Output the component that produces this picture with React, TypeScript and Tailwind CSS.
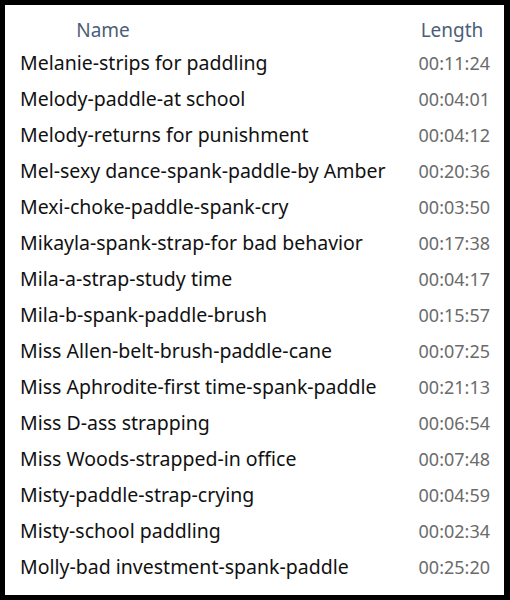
const rows: [string, string][] = [
  ["Melanie-strips for paddling", "00:11:24"],
  ["Melody-paddle-at school", "00:04:01"],
  ["Melody-returns for punishment", "00:04:12"],
  ["Mel-sexy dance-spank-paddle-by Amber", "00:20:36"],
  ["Mexi-choke-paddle-spank-cry", "00:03:50"],
  ["Mikayla-spank-strap-for bad behavior", "00:17:38"],
  ["Mila-a-strap-study time", "00:04:17"],
  ["Mila-b-spank-paddle-brush", "00:15:57"],
  ["Miss Allen-belt-brush-paddle-cane", "00:07:25"],
  ["Miss Aphrodite-first time-spank-paddle", "00:21:13"],
  ["Miss D-ass strapping", "00:06:54"],
  ["Miss Woods-strapped-in office", "00:07:48"],
  ["Misty-paddle-strap-crying", "00:04:59"],
  ["Misty-school paddling", "00:02:34"],
  ["Molly-bad investment-spank-paddle", "00:25:20"],
];

export default function App() {
  return (
    <div className="h-[600px] w-[510px] bg-black pb-[5px] pl-[5px] pr-[6px] pt-[5px] font-['Noto_Sans',sans-serif]">
      <div className="h-full w-full bg-white">
        <div className="flex h-[40px] items-center pt-[10px] text-[19px] text-[#4b5e78]">
          <div className="w-[196px] text-center">Name</div>
          <div className="flex-1" />
          <div className="w-[100px] pr-[4px] text-center">Length</div>
        </div>
        {rows.map(([name, len]) => (
          <div key={name} className="flex h-[36px] items-center pl-[15px] pr-[14px]">
            <span className="flex-1 text-[19.5px] text-[#111]">{name}</span>
            <span className="text-[18px] text-[#6b6b6b]">{len}</span>
          </div>
        ))}
      </div>
    </div>
  );
}
